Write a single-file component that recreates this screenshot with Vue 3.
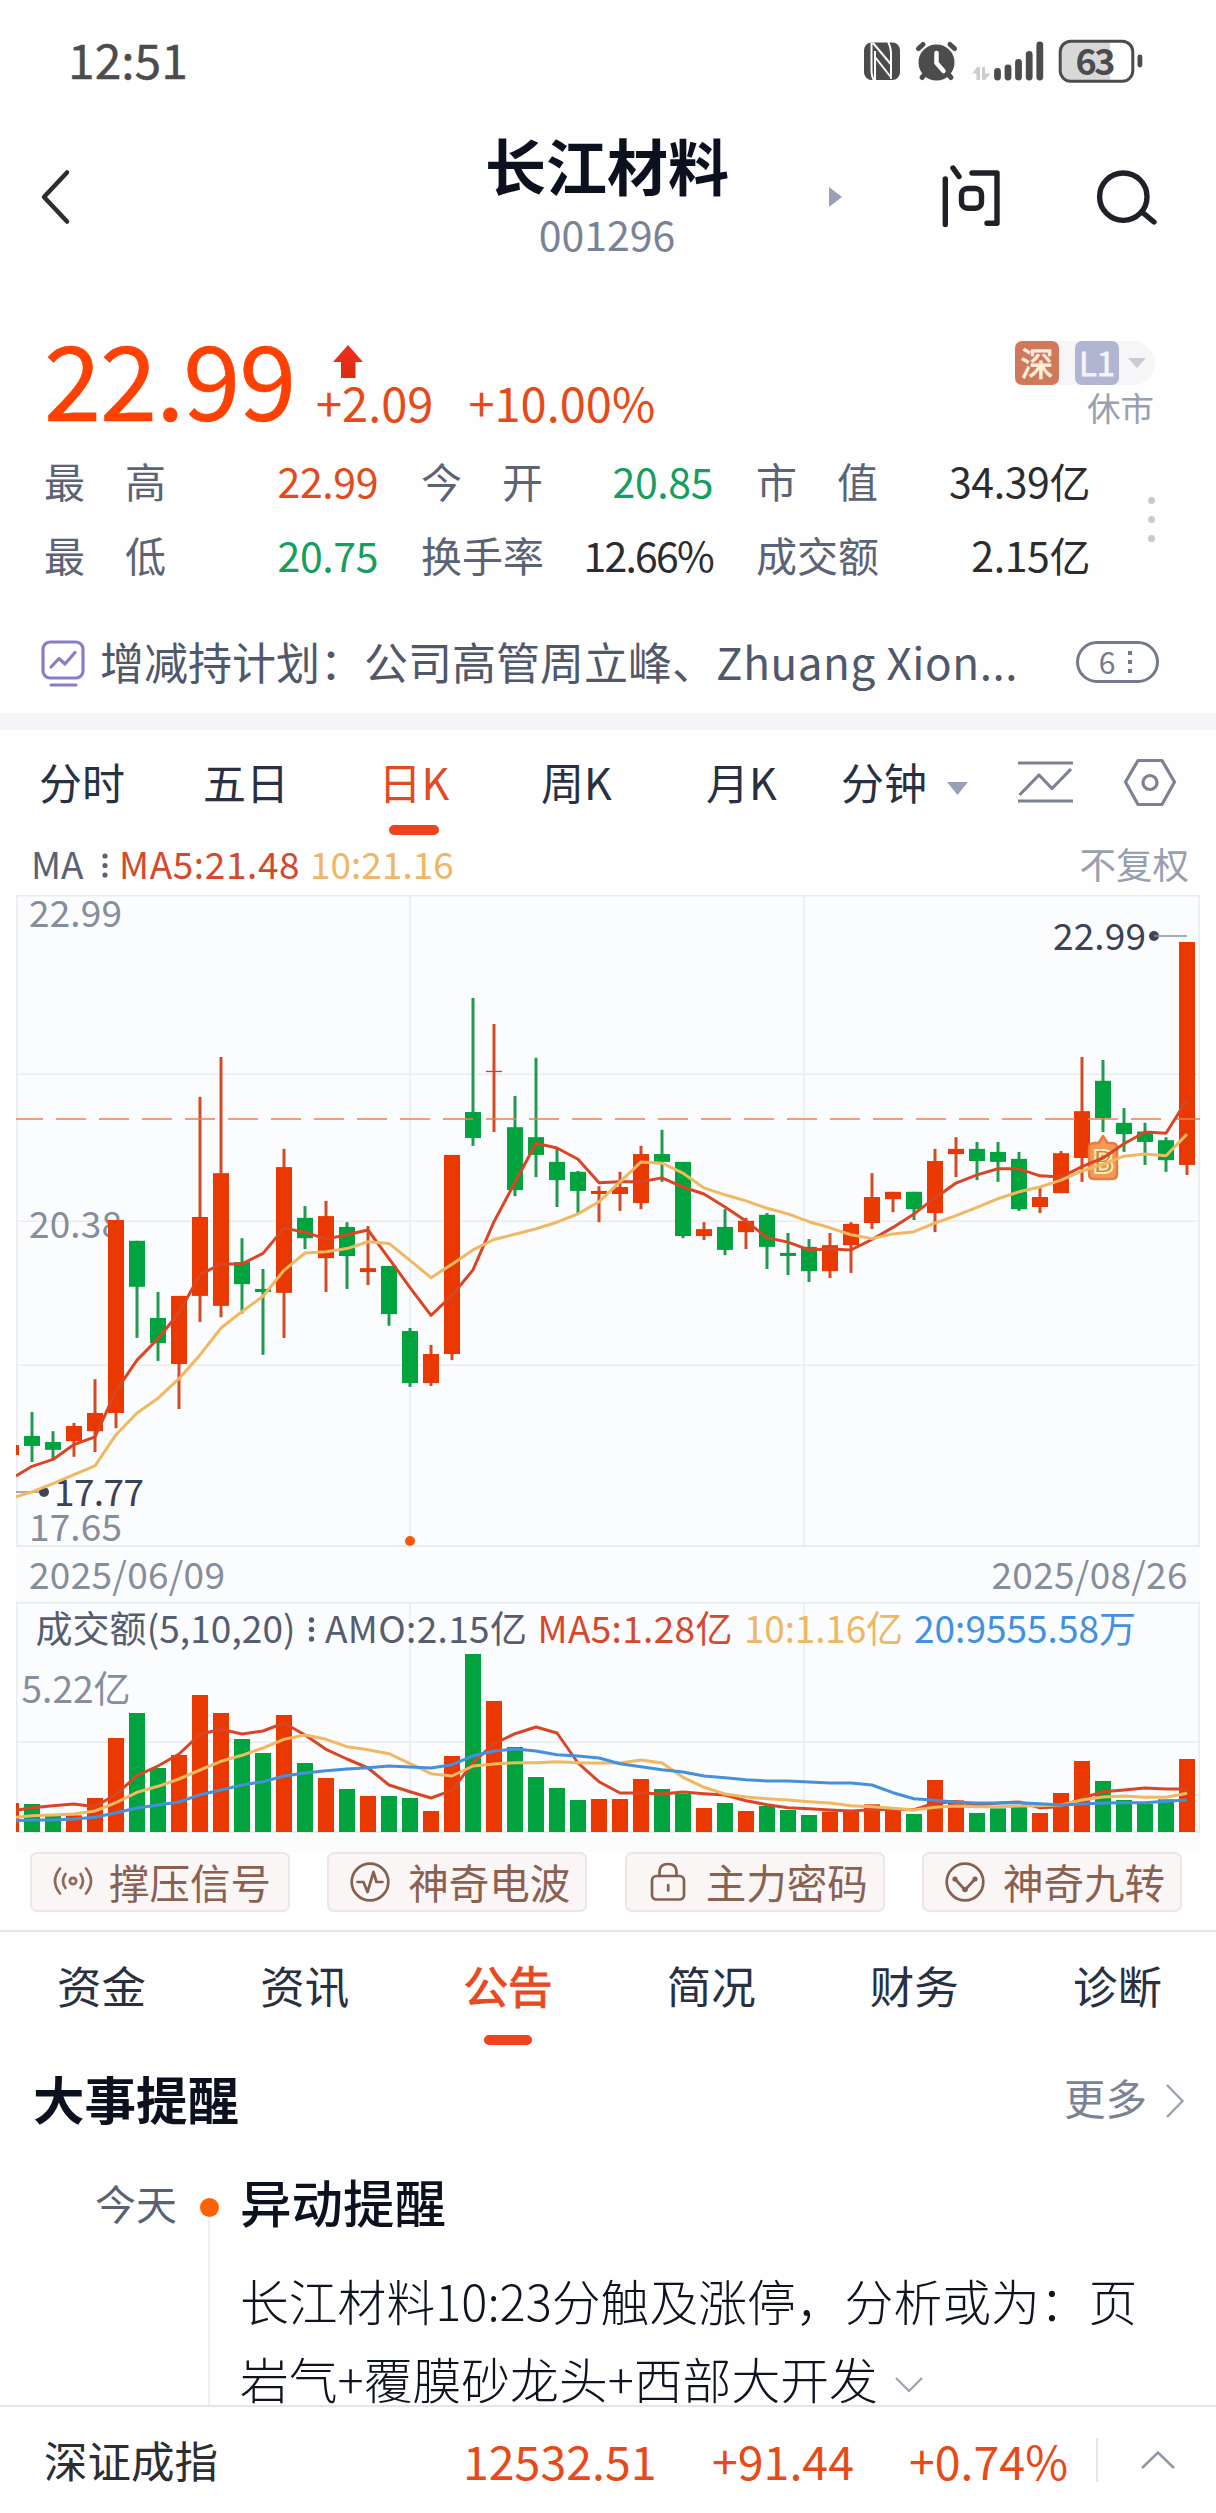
<script setup>
import { ref } from 'vue'

const stats = [
  { label: ['最', '高'], value: '22.99', cls: 'up' },
  { label: ['今', '开'], value: '20.85', cls: 'down' },
  { label: ['市', '值'], value: '34.39亿', cls: '' },
  { label: ['最', '低'], value: '20.75', cls: 'down' },
  { label: ['换', '手', '率'], value: '12.66%', cls: 'tight' },
  { label: ['成', '交', '额'], value: '2.15亿', cls: '' },
]

const periods = ['分时', '五日', '日K', '周K', '月K']
const period = ref('日K')

const tabs = ['资金', '资讯', '公告', '简况', '财务', '诊断']
const tab = ref('公告')

// direction, high, body top, body bottom, low, volume top
const candles = [
  ['r', 1303, 1303, 1326, 1326, 789],
  ['g', 1227, 1282, 1305, 1342, 792],
  ['g', 1271, 1296, 1314, 1335, 828],
  ['r', 1252, 1259, 1294, 1330, 826],
  ['r', 1151, 1229, 1271, 1319, 774],
  ['r', 784, 784, 1229, 1264, 594],
  ['g', 832, 832, 938, 1056, 519],
  ['g', 950, 1010, 1068, 1109, 684],
  ['r', 959, 959, 1116, 1220, 645],
  ['r', 500, 777, 959, 1019, 465],
  ['r', 408, 676, 982, 1008, 519],
  ['g', 826, 881, 932, 1000, 597],
  ['g', 897, 943, 950, 1095, 639],
  ['r', 620, 662, 952, 1056, 525],
  ['g', 752, 779, 826, 851, 669],
  ['r', 740, 775, 872, 950, 714],
  ['g', 789, 800, 867, 943, 747],
  ['r', 798, 895, 904, 934, 768],
  ['g', 890, 890, 1001, 1028, 768],
  ['g', 1033, 1040, 1160, 1169, 774],
  ['r', 1072, 1093, 1160, 1167, 813],
  ['r', 634, 634, 1093, 1107, 648],
  ['g', 272, 535, 595, 613, 342],
  ['r', 332, 440, 443, 581, 483],
  ['g', 498, 570, 715, 729, 621],
  ['g', 410, 593, 634, 685, 711],
  ['g', 618, 650, 692, 754, 744],
  ['g', 671, 673, 717, 768, 780],
  ['r', 706, 717, 724, 789, 777],
  ['r', 673, 708, 724, 763, 777],
  ['r', 613, 632, 745, 759, 717],
  ['g', 576, 632, 650, 696, 747],
  ['g', 650, 650, 821, 826, 762],
  ['r', 789, 805, 821, 830, 804],
  ['g', 759, 800, 853, 865, 789],
  ['r', 779, 786, 812, 851, 813],
  ['g', 768, 772, 846, 897, 798],
  ['g', 814, 860, 867, 911, 810],
  ['g', 828, 846, 902, 927, 825],
  ['r', 814, 842, 902, 918, 815],
  ['r', 789, 793, 842, 906, 813],
  ['r', 676, 731, 791, 805, 793],
  ['r', 719, 719, 736, 766, 813],
  ['g', 719, 719, 759, 784, 822],
  ['r', 620, 648, 768, 812, 720],
  ['r', 593, 620, 632, 685, 781],
  ['g', 604, 620, 648, 692, 819],
  ['g', 604, 627, 650, 696, 805],
  ['g', 627, 643, 759, 763, 801],
  ['r', 706, 731, 754, 768, 819],
  ['r', 625, 630, 722, 722, 759],
  ['r', 408, 533, 641, 696, 663],
  ['g', 415, 463, 549, 581, 723],
  ['g', 526, 560, 586, 627, 780],
  ['g', 560, 580, 604, 657, 792],
  ['g', 593, 600, 646, 673, 778],
  ['r', 143, 143, 657, 680, 657],
]

const ma5 = [1374, 1352, 1336, 1302, 1284, 1178, 1107, 1058, 998, 910, 886, 885, 861, 803, 812, 828, 818, 807, 873, 940, 1004, 958, 899, 788, 697, 607, 618, 644, 698, 696, 696, 687, 708, 724, 754, 786, 825, 835, 853, 851, 853, 829, 801, 770, 733, 699, 680, 666, 666, 682, 685, 661, 641, 608, 581, 584, 507]
const ma10 = [1422, 1411, 1392, 1371, 1351, 1279, 1229, 1195, 1150, 1095, 1033, 995, 960, 900, 860, 857, 850, 834, 838, 877, 917, 886, 853, 829, 817, 804, 789, 770, 742, 696, 650, 653, 676, 710, 726, 740, 757, 770, 788, 802, 818, 827, 816, 811, 791, 774, 755, 735, 719, 708, 692, 671, 655, 637, 632, 636, 586]
const vol5 = [811, 803, 797, 792, 800, 763, 707, 678, 642, 583, 568, 582, 573, 549, 585, 628, 657, 684, 735, 755, 774, 751, 668, 611, 581, 561, 579, 669, 725, 759, 759, 762, 756, 761, 765, 782, 794, 803, 806, 810, 813, 809, 808, 809, 789, 785, 795, 789, 786, 803, 800, 775, 755, 750, 744, 747, 747]
const vol10 = [832, 827, 825, 822, 813, 788, 757, 739, 717, 690, 664, 646, 624, 598, 585, 598, 620, 629, 641, 671, 701, 708, 678, 672, 668, 668, 665, 668, 669, 669, 660, 669, 712, 742, 762, 771, 776, 780, 785, 789, 797, 800, 805, 810, 802, 798, 800, 800, 798, 797, 795, 780, 771, 768, 772, 772, 760]
const vol20 = [842, 840, 840, 837, 832, 818, 804, 795, 786, 764, 750, 735, 725, 708, 699, 692, 687, 683, 678, 681, 684, 674, 648, 633, 627, 633, 644, 648, 654, 671, 680, 689, 696, 708, 713, 719, 723, 723, 726, 729, 729, 735, 758, 776, 781, 787, 789, 789, 788, 791, 795, 792, 789, 788, 788, 784, 780]

const colors = { r: '#e93800', g: '#00a33e' }
const wicks = { r: '#d24a26', g: '#219a50' }

const cx = i => 11 + i * 21
const py = v => 880 + v * 0.43367
const vy = v => 1540 + v / 3
const line = (data, y) =>
  data.map((v, i) => `${i === 0 ? 16 : cx(i)},${y(v).toFixed(1)}`).join(' ')
</script>

<template>
  <div class="page">
    <div class="status">
      <span class="time">12:51</span>
      <svg class="status-icons" viewBox="864 36 280 50" width="280" height="50">
        <rect x="864" y="42.5" width="36" height="37.5" rx="7.5" fill="#4c4c4c" />
        <g fill="none" stroke="#fff" stroke-width="2" stroke-linejoin="round">
          <path d="M871.5 42.500V70Q871.500 77 874.500 81M873 43L891.500 65M888 42Q890.500 46 891 53V79M875 51V80M875 57L891.500 78" />
        </g>
        <g stroke="#4c4c4c" stroke-width="5" stroke-linecap="round" fill="none">
          <circle cx="936.500" cy="62.500" r="15.500" fill="#4c4c4c" />
          <path d="M918.500 48.500L923 44.500M954.500 48.500L950 44.500M926 73L922 77.500M947 73L951 77.500" />
        </g>
        <path d="M936.500 53V63L943.500 71" fill="none" stroke="#fff" stroke-width="4.500" stroke-linecap="round" stroke-linejoin="round" />
        <path d="M972.500 73.500L977 67H980V80H976.500V73.500ZM982 67H985V73.500H990.500L985 80H982Z" fill="#cdcdcd" />
        <g stroke="#4c4c4c" stroke-width="6.800" stroke-linecap="round">
          <path d="M997.500 71.500V77M1008 68V77M1018.500 62.500V77M1029.200 54.500V77M1039.800 45V77" />
        </g>
        <path d="M1070 41.500H1110V81H1070Q1060 81 1060 71V51Q1060 41.500 1070 41.500Z" fill="#d8d8d8" />
        <rect x="1060.200" y="41.300" width="72.600" height="40" rx="10.500" fill="none" stroke="#4c4c4c" stroke-width="3" />
        <rect x="1137.500" y="54.500" width="4.800" height="13" rx="2.400" fill="#4c4c4c" />
        <text x="1075.500" y="74.500" class="bat" textLength="40">63</text>
      </svg>
    </div>

    <div class="header">
      <svg class="back" width="36" height="60" viewBox="0 0 36 60">
        <path d="M30 5.500L7 30L30 54.500" fill="none" stroke="#2c2d30" stroke-width="4.500" stroke-linecap="round" stroke-linejoin="round" />
      </svg>
      <div class="title">
        <h1>长江材料</h1>
        <p>001296</p>
      </div>
      <svg class="next" width="14" height="22" viewBox="0 0 14 22">
        <path d="M0 1L13 11L0 21Z" fill="#9aa1b5" />
      </svg>
      <svg class="head-icons" width="226" height="70" viewBox="936 160 226 70">
        <g fill="none" stroke="#1e2227" stroke-width="5.400" stroke-linecap="round" stroke-linejoin="round">
          <path d="M945.300 179V224.500M953 168L959 176.500M972 173H997V223.300H987" />
          <rect x="961.500" y="188.500" width="20" height="19.700" rx="6" />
          <circle cx="1123.300" cy="196.700" r="23.700" />
          <path d="M1142 212L1154 222" />
        </g>
      </svg>
    </div>

    <div class="quote">
      <span class="price">22.99</span>
      <div class="change">
        <svg width="30" height="36" viewBox="0 0 30 36">
          <defs>
            <linearGradient id="arrow" x1="0" y1="0" x2="0" y2="1">
              <stop offset="0" stop-color="#f22d24" />
              <stop offset="1" stop-color="#d92d0c" />
            </linearGradient>
          </defs>
          <path d="M15 0L30 17H22.500V33H8V17H0Z" fill="url(#arrow)" />
        </svg>
        <div class="change-nums"><span>+2.09</span><span>+10.00%</span></div>
      </div>
      <div class="market">
        <div class="badges">
          <span class="badge sz">深</span>
          <span class="badge l1">L1</span>
          <svg width="18" height="10" viewBox="0 0 18 10"><path d="M0 0H18L9 10Z" fill="#c8cbd3" /></svg>
        </div>
        <span class="closed">休市</span>
      </div>
    </div>

    <div class="stats">
      <div class="stats-grid">
        <div v-for="s in stats" :key="s.label.join('')" class="stat">
          <span class="stat-label"><i v-for="c in s.label" :key="c">{{ c }}</i></span>
          <span class="stat-value" :class="s.cls">{{ s.value }}</span>
        </div>
      </div>
      <div class="more-dots"><b></b><b></b><b></b></div>
    </div>

    <div class="notice">
      <svg width="44" height="48" viewBox="0 0 44 48">
        <g fill="none" stroke="#8b7cc8" stroke-width="3.200" stroke-linecap="round" stroke-linejoin="round">
          <rect x="2" y="2" width="40" height="36" rx="7" />
          <path d="M10 27L18 18.500L24 24L34 12.500" />
          <path d="M10 45H35" />
        </g>
      </svg>
      <p>增减持计划：公司高管周立峰、<span>Zhuang Xion...</span></p>
      <div class="count"><span>6</span><svg width="4" height="22" viewBox="0 0 4 22"><path d="M0 0H4V4H0ZM0 9H4V13H0ZM0 18H4V22H0Z" fill="#737a8c" /></svg></div>
    </div>

    <div class="band"></div>

    <div class="periods">
      <span v-for="p in periods" :key="p" :class="{ active: p === period }" @click="period = p">{{ p }}</span>
      <span class="minutes">分钟
        <svg width="22" height="13" viewBox="0 0 22 13"><path d="M0 0H21L10.500 13Z" fill="#9aa1b5" /></svg>
      </span>
      <svg class="tool-icons" width="162" height="50" viewBox="1016 757 162 50">
        <g fill="none" stroke="#7d8293" stroke-width="3.200" stroke-linejoin="round">
          <path d="M1018 763H1073M1018 801H1073M1019.500 795L1039 775L1052 788.500L1071 769" />
          <path d="M1138 760.500H1162L1174.500 782L1162 804.500H1138L1125.500 782Z" />
          <circle cx="1150" cy="782.500" r="7" />
        </g>
      </svg>
    </div>

    <div class="ma-row">
      <span class="ma-name">MA</span>
      <svg width="6" height="26" viewBox="0 0 6 26"><g fill="#5a6172"><circle cx="3" cy="3" r="2.600" /><circle cx="3" cy="12.500" r="2.600" /><circle cx="3" cy="22" r="2.600" /></g></svg>
      <span class="ma5">MA5:21.48</span>
      <span class="ma10">10:21.16</span>
      <span class="adjust">不复权</span>
    </div>

    <svg class="chart" width="1184" height="957" viewBox="16 895 1184 957">
      <rect x="16" y="895" width="1184" height="957" fill="#fbfcfe" />
      <g stroke="#e9ebee" stroke-width="1.500">
        <path d="M16 895.800H1200M16 1074.300H1200M16 1221.300H1200M16 1365.300H1200M16 1742H1200" />
        <path d="M16.700 895V1546M1199.300 895V1546M16.700 1602V1832M1199.300 1602V1832M410 895V1546M804 895V1546M410 1602V1832M804 1602V1832" />
        <path d="M16 1546H1200M16 1602.700H1200M16 1832H1200" stroke-width="2" />
      </g>

      <g class="axis">
        <text x="29" y="927" textLength="93">22.99</text>
        <text x="29" y="1238" textLength="93">20.38</text>
        <text x="29" y="1541" textLength="93">17.65</text>
        <text x="29" y="1589" textLength="196">2025/06/09</text>
        <text x="991.500" y="1589" textLength="196">2025/08/26</text>
        <text x="21.500" y="1702.500" textLength="109">5.22亿</text>
      </g>
      <path d="M16 1492H44" stroke="#8c919c" stroke-width="1.500" />
      <circle cx="44" cy="1492" r="5" fill="#3f4452" />
      <text class="mark" x="54" y="1506" textLength="90">17.77</text>

      <!-- candles -->
      <g v-for="(c, i) in candles" :key="i">
        <line :x1="cx(i)" :x2="cx(i)" :y1="py(c[1])" :y2="py(c[4])" :stroke="wicks[c[0]]" stroke-width="3" />
        <rect :x="cx(i) - 8" :y="py(c[2])" width="16" :height="py(c[3]) - py(c[2])" :fill="colors[c[0]]" />
        <rect :x="cx(i) - 8" :y="vy(c[5])" width="16" :height="1832 - vy(c[5])" :fill="colors[c[0]]" />
      </g>

      <path d="M16 1119H1200" stroke="#ee7d50" stroke-width="1.600" stroke-dasharray="30 13" stroke-dashoffset="3" />

      <!-- buy marker -->
      <path d="M1103 1136L1107.500 1143H1112Q1117 1143 1117 1148V1174Q1117 1179 1112 1179H1094Q1089 1179 1089 1174V1148Q1089 1143 1094 1143H1098.500Z" fill="#f19a58" stroke="#ea7c3e" stroke-width="2.500" stroke-linejoin="round" />
      <text x="1092.500" y="1172.500" class="buy">B</text>

      <g fill="none" stroke-width="3" stroke-linejoin="round">
        <polyline :points="line(ma5, py)" stroke="#da4625" />
        <polyline :points="line(ma10, py)" stroke="#f0b862" />
        <polyline :points="line(vol5, vy)" stroke="#da4625" />
        <polyline :points="line(vol10, vy)" stroke="#f0b862" />
        <polyline :points="line(vol20, vy)" stroke="#4490dc" />
      </g>

      <text class="mark" x="1053" y="950" textLength="93">22.99</text>
      <circle cx="1154" cy="936" r="5" fill="#3f4452" />
      <path d="M1154 936H1187" stroke="#8c919c" stroke-width="1.500" />
      <circle cx="410" cy="1541" r="5" fill="#fa5a08" />

      <g class="amount">
        <text x="35.500" y="1642.500" textLength="260">成交额(5,10,20)</text>
        <g fill="#565d6e"><circle cx="311.500" cy="1620" r="2.700" /><circle cx="311.500" cy="1629.500" r="2.700" /><circle cx="311.500" cy="1639" r="2.700" /></g>
        <text x="325" y="1642.500" textLength="202">AMO:2.15亿</text>
        <text x="537.500" y="1642.500" textLength="195" fill="#d4492c">MA5:1.28亿</text>
        <text x="744" y="1642.500" textLength="159" fill="#edb765">10:1.16亿</text>
        <text x="914" y="1642.500" textLength="222" fill="#4490e0">20:9555.58万</text>
      </g>
    </svg>

    <div class="signals">
      <button>
        <svg width="40" height="40" viewBox="0 0 40 40">
          <g fill="none" stroke="#906855" stroke-width="2.700" stroke-linecap="round">
            <circle cx="20" cy="19" r="3.200" />
            <path d="M12.500 12Q7.500 19 12.500 26M27.500 12Q32.500 19 27.500 26M7 6.500Q-3 19 7 31.500M33 6.500Q43 19 33 31.500" />
          </g>
        </svg>撑压信号
      </button>
      <button>
        <svg width="40" height="40" viewBox="0 0 40 40">
          <g fill="none" stroke="#85604f" stroke-width="2.700" stroke-linecap="round" stroke-linejoin="round">
            <circle cx="20" cy="20" r="18.300" />
            <path d="M7.500 20H13.500L17.500 30L23.500 10L26.500 20H32.500" />
          </g>
        </svg>神奇电波
      </button>
      <button>
        <svg width="40" height="40" viewBox="0 0 40 40">
          <g fill="none" stroke="#85604f" stroke-width="2.700" stroke-linecap="round">
            <rect x="4" y="14" width="32" height="23.500" rx="4.500" />
            <path d="M11.500 14V10Q11.500 2 20 2Q28.500 2 28.500 10V14M20.200 23V28.500" />
          </g>
        </svg>主力密码
      </button>
      <button>
        <svg width="40" height="40" viewBox="0 0 40 40">
          <g fill="none" stroke="#85604f" stroke-width="2.700" stroke-linecap="round" stroke-linejoin="round">
            <circle cx="20" cy="20" r="18.300" />
            <path d="M10 17L20 28L30 17" />
          </g>
          <circle cx="10" cy="17" r="2.600" fill="#85604f" />
          <circle cx="30" cy="17" r="2.600" fill="#85604f" />
          <circle cx="20" cy="27.500" r="2.800" fill="#85604f" />
        </svg>神奇九转
      </button>
    </div>

    <div class="tabs">
      <span v-for="t in tabs" :key="t" :class="{ active: t === tab }" @click="tab = t">{{ t }}</span>
    </div>

    <div class="events">
      <div class="events-head">
        <h2>大事提醒</h2>
        <a>更多
          <svg width="20" height="36" viewBox="0 0 20 36"><path d="M2 2L17.500 18L2 34" fill="none" stroke="#9aa1b3" stroke-width="2.400" /></svg>
        </a>
      </div>
      <div class="event">
        <span class="day">今天</span>
        <div class="rail"><b></b></div>
        <div class="event-body">
          <h3>异动提醒</h3>
          <p>长江材料10:23分触及涨停，分析或为：页<br />岩气+覆膜砂龙头+西部大开发<svg width="30" height="18" viewBox="0 0 30 18"><path d="M2 2L15 15L28 2" fill="none" stroke="#9aa1b3" stroke-width="2.200" /></svg></p>
        </div>
      </div>
    </div>

    <div class="index-bar">
      <span class="index-name">深证成指</span>
      <span class="index-num n1">12532.51</span>
      <span class="index-num n2">+91.44</span>
      <span class="index-num n3">+0.74%</span>
      <i></i>
      <svg width="36" height="20" viewBox="0 0 36 20"><path d="M2 18L18 2.500L34 18" fill="none" stroke="#9298a8" stroke-width="2.600" /></svg>
    </div>
  </div>
</template>

<style>
body {
  background: #fff;
}
</style>

<style scoped>
.page {
  width: 1216px;
  height: 2513px;
  overflow: hidden;
  background: #fefefe;
  font-family: "Noto Sans CJK SC", sans-serif;
  display: flex;
  flex-direction: column;
  white-space: nowrap;
}

.page > * {
  flex: none;
  box-sizing: border-box;
}

h1, h2, h3, p {
  margin: 0;
}

svg {
  display: block;
  flex: none;
}

.status {
  height: 120px;
  padding: 0 74px 0 68px;
  display: flex;
  justify-content: space-between;
}

.time {
  margin-top: 28px;
  font-size: 48px;
  line-height: 60px;
  color: #4c4c4c;
  -webkit-text-stroke: 0.4px #4c4c4c;
}

.status-icons {
  margin: 36px -2px 0 0;
}

.bat {
  font-size: 36px;
  font-weight: 700;
  fill: #4c4c4c;
}

.header {
  height: 200px;
  display: flex;
}

.back {
  margin: 47px 0 0 37px;
}

.title {
  width: 260px;
  margin: 9px 0 0 404px;
  text-align: center;
}

.title h1 {
  font-size: 61px;
  line-height: 72px;
  font-weight: 700;
  color: #0b111e;
}

.title p {
  margin-top: 8px;
  font-size: 41px;
  line-height: 48px;
  color: #7a8298;
}

.next {
  margin: 66px 0 0 92px;
}

.head-icons {
  margin: 40px 0 0 93px;
}

.quote {
  height: 120px;
  padding: 0 61px 0 44px;
  display: flex;
}

.price {
  width: 272px;
  font-size: 103px;
  line-height: 120px;
  margin-top: -3px;
  color: #fd4102;
  letter-spacing: -1.2px;
  -webkit-text-stroke: 0.6px #fd4102;
}

.change {
  padding-top: 25px;
}

.change svg {
  margin-left: 17px;
}

.change-nums {
  display: flex;
  gap: 35px;
  margin-top: -7px;
  font-size: 47px;
  line-height: 56px;
  color: #e64a19;
}

.market {
  margin-left: auto;
  padding-top: 21px;
  display: flex;
  flex-direction: column;
  align-items: flex-end;
}

.badges {
  display: flex;
  align-items: center;
  width: 140px;
  height: 44px;
  background: #f6f6f9;
  border-radius: 6px 22px 22px 6px;
}

.badge {
  width: 44px;
  height: 44px;
  margin-right: 16px;
  border-radius: 7px;
  font-size: 33px;
  line-height: 42px;
  text-align: center;
  color: #ffeedd;
  -webkit-text-stroke: 0.8px;
}

.sz {
  background: #d0795a;
}

.l1 {
  background: #b0b5d2;
  color: #f2f4fb;
  margin-right: 9px;
}

.closed {
  margin: 1px 1px 0 0;
  font-size: 33.5px;
  line-height: 42px;
  color: #98a0b1;
}

.stats {
  height: 160px;
  padding-left: 44px;
  display: flex;
}

.stats-grid {
  display: grid;
  grid-template-columns: 334px 292px 334px;
  grid-template-rows: 74px 74px;
  column-gap: 43px;
  width: 1046px;
  margin-top: 3px;
}

.stat {
  display: flex;
  justify-content: space-between;
  align-items: center;
  font-size: 41px;
  line-height: 74px;
}

.stat-label {
  display: flex;
  justify-content: space-between;
  width: 122px;
  color: #5c6374;
}

.stat-label i {
  font-style: normal;
}

.stat-value {
  color: #2c2c2e;
  letter-spacing: -0.4px;
}

.stat-value.up {
  color: #e24b1d;
}

.stat-value.down {
  color: #179d5e;
}

.stat-value.tight {
  letter-spacing: -1.8px;
}

.more-dots {
  display: flex;
  flex-direction: column;
  gap: 12px;
  margin: 57px 0 0 58px;
}

.more-dots b {
  width: 7px;
  height: 7px;
  border-radius: 50%;
  background: #c6cad4;
}

.notice {
  height: 113px;
  padding: 0 57px 0 41px;
  display: flex;
}

.notice > svg {
  margin-top: 40px;
}

.notice p {
  margin: 31px 0 0 15px;
  font-size: 44px;
  line-height: 60px;
  color: #50586a;
}

.notice p span {
  letter-spacing: 0.6px;
}

.count {
  box-sizing: border-box;
  display: flex;
  align-items: center;
  justify-content: center;
  gap: 13px;
  width: 83px;
  height: 42px;
  margin: 41px 0 0 auto;
  border: 3px solid #737a8c;
  border-radius: 21px;
  font-size: 30px;
  line-height: 34px;
  color: #737a8c;
}

.count span {
  margin: -2px 0 0 -4px;
}

.band {
  height: 17px;
  background: #f4f5f9;
}

.periods {
  height: 110px;
  display: grid;
  grid-template-columns: 164px 164px 172px 153px 177px 184px 162px;
  font-size: 43px;
  line-height: 62px;
  padding-top: 20px;
  color: #283041;
}

.periods span {
  text-align: center;
}

.active {
  color: #e04a24;
}

.active::after {
  content: "";
  display: block;
  width: 50px;
  height: 10px;
  margin: 13px auto 0;
  border-radius: 5px;
  background: #ee431c;
}

.periods .minutes {
  display: flex;
  padding-left: 11px;
}

.minutes svg {
  margin: 32px 0 0 20px;
}

.tool-icons {
  margin: 7px 0 0 2px;
}

.ma-row {
  height: 55px;
  padding: 0 27px 0 31px;
  display: flex;
  font-size: 37px;
  line-height: 47px;
}

.ma-name {
  color: #5a6172;
  width: 71px;
}

.ma-row svg {
  margin-top: 13px;
}

.ma5 {
  margin-left: 11px;
  width: 191px;
  color: #d4492c;
  letter-spacing: 0.6px;
}

.ma10 {
  color: #edb765;
}

.adjust {
  margin-left: auto;
  font-size: 36.5px;
  color: #989fb0;
}

.chart {
  margin-left: 16px;
}

.axis text {
  font-size: 37px;
  fill: #868d9b;
}

.mark {
  font-size: 37px;
  fill: #3c4252;
}

.buy {
  font-size: 31px;
  font-weight: 700;
  fill: #c58a3c;
  stroke: #fbe8b8;
  stroke-width: 2px;
}

.amount {
  font-size: 37px;
  fill: #565d6e;
}

.signals {
  height: 78px;
  padding: 0 34px 0 30px;
  display: flex;
  justify-content: space-between;
}

.signals button {
  box-sizing: border-box;
  display: flex;
  align-items: center;
  gap: 18px;
  width: 260px;
  height: 60px;
  padding: 0 0 0 21px;
  border: 2px solid #ece6e6;
  border-radius: 7px;
  background: #f9f6f5;
  font-family: inherit;
  font-size: 40.5px;
  line-height: 54px;
  color: #8a6150;
}

.signals button:first-child {
  gap: 16px;
}

.tabs {
  height: 130px;
  padding-top: 22px;
  border-top: 2px solid #e4e5e8;
  display: flex;
  font-size: 44.5px;
  line-height: 62px;
  color: #283041;
}

.tabs span {
  flex: 0 0 203.2px;
  text-align: center;
}

.tabs .active {
  color: #e64a22;
  -webkit-text-stroke: 1px #e64a22;
}

.tabs .active::after {
  width: 48px;
  margin-top: 19px;
}

.events {
  height: 345px;
  overflow: hidden;
}

.events-head {
  display: flex;
  justify-content: space-between;
  height: 100px;
  padding: 0 31px 0 33px;
}

.events-head h2 {
  margin-top: 3px;
  font-size: 51.5px;
  line-height: 70px;
  color: #0b111e;
}

.events-head a {
  display: flex;
  margin-top: 7px;
  font-size: 41.5px;
  line-height: 60px;
  color: #7a8296;
}

.events-head svg {
  margin: 16px 0 0 18px;
}

.event {
  display: flex;
  height: 245px;
}

.day {
  width: 199px;
  box-sizing: border-box;
  padding: 12px 22px 0 0;
  text-align: right;
  font-size: 41px;
  line-height: 60px;
  color: #5a6172;
}

.rail {
  width: 20px;
  display: flex;
  flex-direction: column;
  align-items: center;
  padding-top: 38px;
}

.rail b {
  width: 19px;
  height: 19px;
  border-radius: 50%;
  background: #ff6200;
}

.rail::after {
  content: "";
  flex: 1;
  width: 2px;
  margin-top: 3px;
  background: #eeeff1;
}

.event-body {
  padding: 6px 0 0 21px;
}

.event-body h3 {
  font-size: 51.5px;
  line-height: 70px;
  font-weight: 500;
  color: #0b111e;
}

.event-body p {
  margin-top: 25px;
  font-size: 48.8px;
  line-height: 78px;
  font-weight: 300;
  color: #0d131f;
}

.event-body svg {
  display: inline-block;
  margin-left: 16px;
  vertical-align: 5px;
}

.index-bar {
  height: 108px;
  padding: 0 40px 0 44px;
  border-top: 2px solid #e4e5e8;
  display: flex;
  align-items: center;
  line-height: 60px;
}

.index-name {
  width: 419px;
  font-size: 43.5px;
  color: #2d2e31;
}

.index-num {
  font-size: 46.5px;
  color: #e64a19;
}

.n1 {
  width: 249px;
}

.n2 {
  width: 197px;
}

.n3 {
  width: 187px;
}

.index-bar i {
  width: 2px;
  height: 44px;
  margin-right: 42px;
  background: #e2e4e8;
}
</style>
